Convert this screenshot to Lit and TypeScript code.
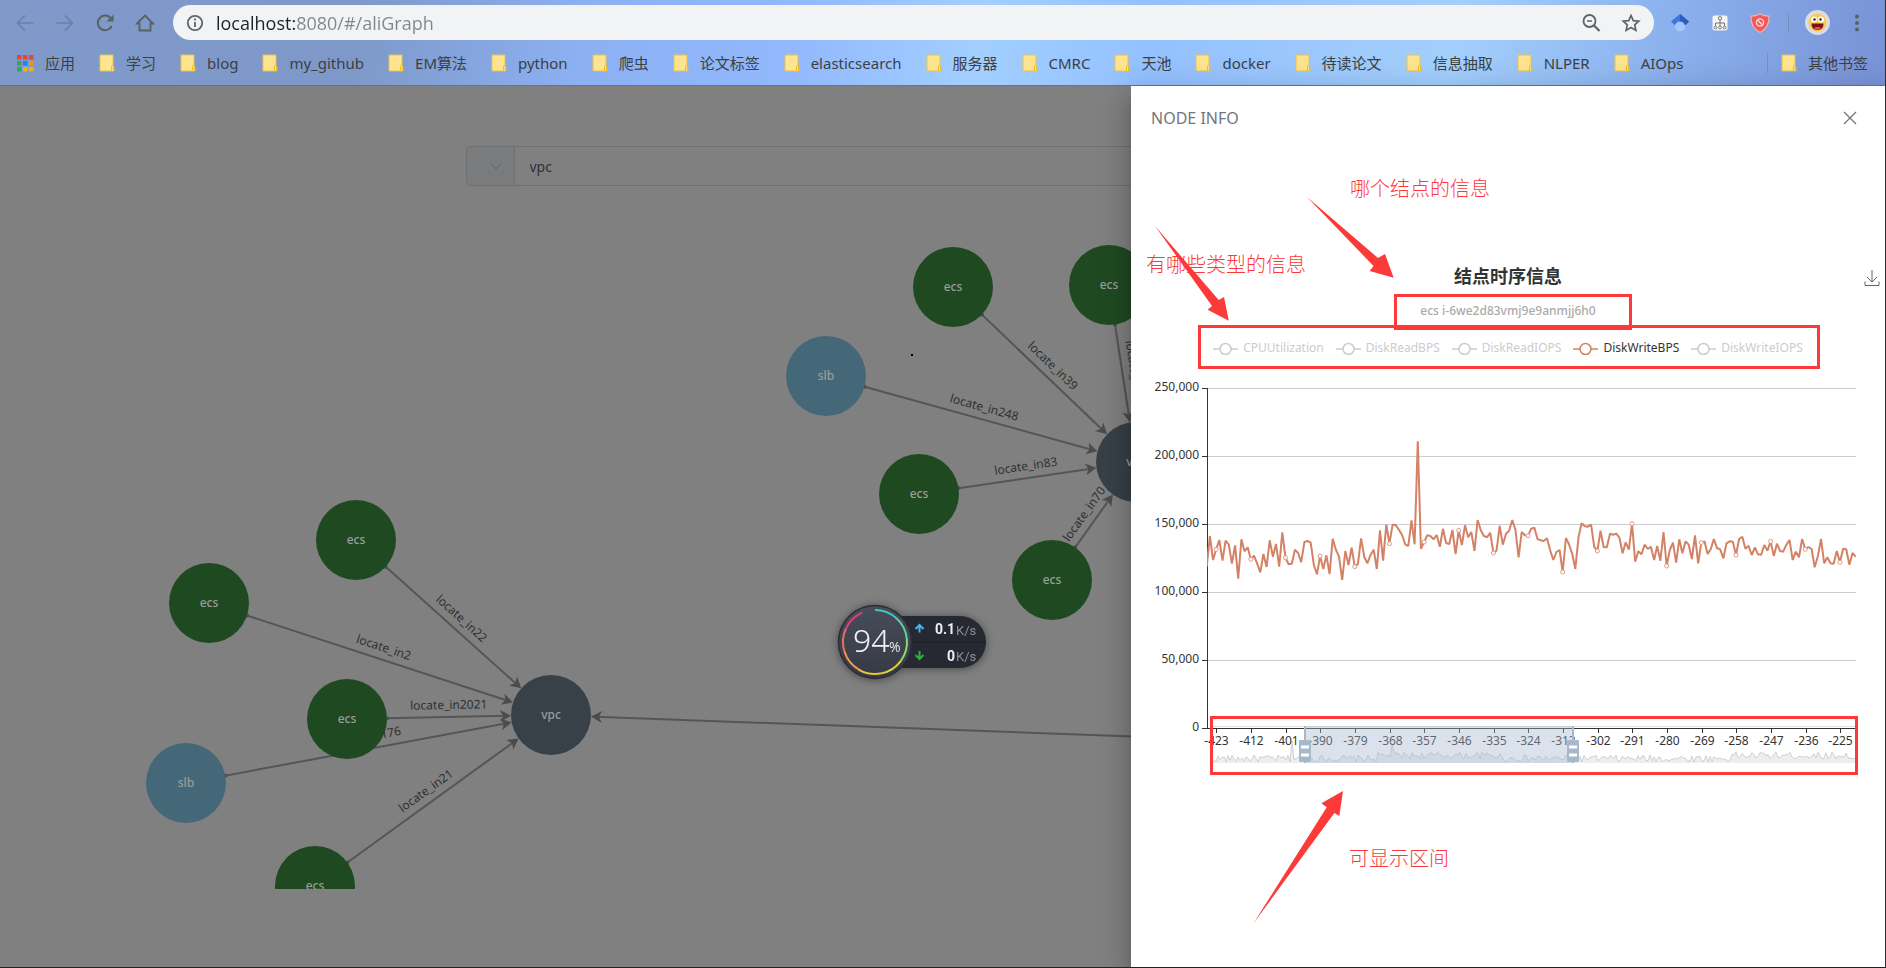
import { LitElement, html, svg, css } from "lit";
import { customElement, state } from "lit/decorators.js";

/* ---------- shared data ---------- */

const BOOKMARKS = [
  "学习", "blog", "my_github", "EM算法", "python", "爬虫", "论文标签", "elasticsearch", "服务器",
  "CMRC", "天池", "docker", "待读论文", "信息抽取", "NLPER", "AIOps",
];

interface Point { x: number; y: number }
interface GraphNode extends Point { kind: "ecs" | "slb" | "vpc" }
const NODES: Record<string, GraphNode> = {
  ecs1: { kind: "ecs", x: 356, y: 454 },
  ecs2: { kind: "ecs", x: 209, y: 517 },
  ecs3: { kind: "ecs", x: 347, y: 633 },
  slb1: { kind: "slb", x: 186, y: 697 },
  ecs4: { kind: "ecs", x: 315, y: 800 },
  vpc1: { kind: "vpc", x: 551, y: 629 },
  ecs5: { kind: "ecs", x: 953, y: 201 },
  ecs6: { kind: "ecs", x: 1109, y: 199 },
  slb2: { kind: "slb", x: 826, y: 290 },
  ecs7: { kind: "ecs", x: 919, y: 408 },
  ecs8: { kind: "ecs", x: 1052, y: 494 },
  vpc2: { kind: "vpc", x: 1136, y: 376 },
};
const OFFSCREEN: Point = { x: 1500, y: 664 };
const EDGES: [Point, Point, string][] = [
  [NODES.ecs1, NODES.vpc1, "locate_in22"],
  [NODES.ecs2, NODES.vpc1, "locate_in2"],
  [NODES.ecs3, NODES.vpc1, "locate_in2021"],
  [NODES.slb1, NODES.vpc1, "locate_in176"],
  [NODES.ecs4, NODES.vpc1, "locate_in21"],
  [NODES.ecs5, NODES.vpc2, "locate_in39"],
  [NODES.ecs6, NODES.vpc2, "locate_in12"],
  [NODES.slb2, NODES.vpc2, "locate_in248"],
  [NODES.ecs7, NODES.vpc2, "locate_in83"],
  [NODES.ecs8, NODES.vpc2, "locate_in70"],
  [OFFSCREEN, NODES.vpc1, ""],
];
const RADIUS = 40;

const SERIES = [
  { name: "CPUUtilization", on: false },
  { name: "DiskReadBPS", on: false },
  { name: "DiskReadIOPS", on: false },
  { name: "DiskWriteBPS", on: true },
  { name: "DiskWriteIOPS", on: false },
];

/* Sample heights, in thirds of a pixel below the top of the chart drawing. */
const SAMPLES = [
  590, 498, 570, 538, 510, 572, 512, 524, 581, 526, 626, 508, 544, 532, 568, 557, 580, 607, 552, 591,
  511, 560, 522, 590, 487, 563, 583, 581, 539, 549, 577, 516, 513, 518, 584, 613, 558, 597, 556, 612,
  506, 539, 560, 630, 543, 585, 533, 590, 582, 505, 560, 580, 555, 539, 597, 481, 572, 464, 521, 464,
  465, 479, 494, 523, 528, 451, 523, 214, 536, 516, 496, 498, 508, 495, 530, 476, 519, 522, 480, 552,
  481, 525, 466, 502, 486, 543, 450, 481, 498, 502, 488, 549, 542, 468, 524, 491, 482, 450, 479, 562,
  486, 496, 497, 476, 473, 507, 511, 513, 505, 540, 570, 546, 540, 606, 504, 523, 551, 597, 502, 460,
  469, 470, 464, 530, 543, 482, 532, 532, 491, 494, 491, 503, 550, 517, 539, 461, 575, 544, 553, 524,
  537, 530, 570, 528, 572, 486, 588, 540, 518, 578, 508, 550, 514, 524, 567, 496, 580, 518, 514, 552,
  537, 507, 535, 538, 565, 520, 514, 515, 555, 507, 500, 536, 527, 555, 532, 553, 554, 525, 542, 514,
  558, 521, 543, 545, 524, 510, 570, 545, 562, 507, 538, 531, 537, 592, 558, 507, 580, 562, 580, 581,
  543, 577, 536, 538, 584, 549, 560,
];
const FIRST_X = 75.7;
const LAST_X = 724.7;
const STEP = (LAST_X - FIRST_X) / (SAMPLES.length - 1);
const POINTS: Point[] = SAMPLES.map((v, i) => ({ x: FIRST_X + i * STEP, y: v / 3 }));

function overviewPoints(): Point[] {
  const out: Point[] = [];
  let seed = 17;
  for (let x = 79; x <= 727; x += 2) {
    seed = (seed * 1103515245 + 12345) % 2147483648;
    const noise = (seed / 2147483648) * 7;
    const rise = (x > 245 && x < 370) || (x > 600 && x < 720) ? 3 : 0;
    let y = 392 - noise - rise;
    if (x === 161) y = 371;
    if (x === 261) y = 374;
    out.push({ x, y });
  }
  return out;
}
const OVERVIEW = overviewPoints();
const path = (pts: Point[]) =>
  pts.map((p, i) => `${i ? "L" : "M"}${p.x.toFixed(1)} ${p.y.toFixed(1)}`).join("");

/* ---------- browser chrome ---------- */

@customElement("browser-bar")
class BrowserBar extends LitElement {
  static styles = css`
    :host {
      display: block;
      height: 86px;
      box-sizing: border-box;
      border-bottom: 1px solid #5877a8;
      background: linear-gradient(96deg, #7f9ac9 0%, #7e99c9 19%, #8cb0f2 31%, #92b8fd 42%, #a2cfff 52%, #94c0ff 61%, #a3cffc 77%, #8cb2ee 88%, #7892d6 100%);
      font-family: "Noto Sans", "Noto Sans CJK SC", sans-serif;
      color: #3c4043;
    }
    .tools { display: flex; align-items: center; padding: 5px 16px 0 13px; height: 35px; }
    .nav { display: flex; gap: 16px; margin-right: 16px; }
    button { border: 0; padding: 0; background: none; display: flex; color: inherit; font: inherit; }
    .icon { width: 24px; height: 24px; fill: none; stroke: currentColor; stroke-width: 2; }
    .dim { color: #6a80a6; }
    .dark { color: #56635f; }
    .omni { flex: 1; display: flex; align-items: center; height: 35px; border-radius: 18px; background: #f1f3f4; padding: 0 11px 0 10px; gap: 9px; color: #5f6368; }
    .url {
      flex: 1; min-width: 0; border: 0; padding: 0; outline: 0; height: 28px;
      font: 18px "Open Sans", sans-serif; color: transparent;
      background: linear-gradient(90deg, #202124 79px, #80868b 79px);
      -webkit-background-clip: text; background-clip: text;
    }
    .tail { display: flex; gap: 16px; }
    .ext { display: flex; gap: 16px; align-items: center; margin-left: 14px; }
    .rule { width: 1px; height: 20px; background: #7490bd; }
    .account { display: flex; align-items: center; gap: 15px; margin-left: 16px; }
    .marks { display: flex; align-items: center; height: 45px; padding: 0 17px; font-size: 15px; line-height: 20px; }
    .list { display: flex; gap: 24px; flex: 1; min-width: 0; }
    a { display: flex; align-items: center; gap: 11px; color: inherit; text-decoration: none; white-space: nowrap; }
    .folder { width: 16px; height: 18px; flex: none; }
    .apps { width: 17px; height: 18px; flex: none; }
    .other { display: flex; align-items: center; gap: 13px; }
  `;

  private folder() {
    return html`<svg class="folder" viewBox="0 0 16 18"><path d="M1 1h13v11.500l1 1V17H1z" fill="#ffe48f" stroke="#e8c24e" /><path d="M12.500 17v-4.500a1 1 0 0 1 2 0V17" fill="#ffdf7d" stroke="#f0bf22" /></svg>`;
  }

  render() {
    const dots = ["#ea4335", "#ea4335", "#ea4335", "#34a853", "#1a86f2", "#f29900", "#34a853", "#f6b100", "#f6b100"];
    return html`
      <div class="tools">
        <div class="nav">
          <button class="dim" aria-label="Back"><svg class="icon" viewBox="0 0 24 24"><path d="M20.500 12H5M12 4.500L4.500 12l7.500 7.500" stroke-width="1.700" /></svg></button>
          <button class="dim" aria-label="Forward"><svg class="icon" viewBox="0 0 24 24"><path d="M3.500 12H19M12 4.500l7.500 7.500-7.500 7.500" stroke-width="1.700" /></svg></button>
          <button class="dark" aria-label="Reload"><svg class="icon" viewBox="0 0 24 24"><path d="M18.700 15a7.300 7.300 0 1 1-1.400-8.200" /><path d="M20.500 3.500v7h-7z" fill="currentColor" stroke="none" /></svg></button>
          <button class="dark" aria-label="Home"><svg class="icon" viewBox="0 0 24 24"><path d="M4 12.500L12 4.500l8 8h-2.500v7h-11v-7z" stroke-width="1.800" /></svg></button>
        </div>
        <div class="omni">
          <svg class="icon" viewBox="0 0 24 24"><circle cx="12" cy="12" r="7.200" stroke-width="1.800" /><path d="M12 11v5M12 7.500v2" stroke-width="1.800" /></svg>
          <input class="url" aria-label="Address" value="localhost:8080/#/aliGraph" />
          <div class="tail">
            <button aria-label="Zoom out"><svg class="icon" viewBox="0 0 24 24"><circle cx="10.500" cy="10" r="6" stroke-width="1.800" /><path d="M15 14.500l5.500 5.500" stroke-width="2.200" /><path d="M8 10h5" stroke-width="1.500" /></svg></button>
            <button aria-label="Bookmark"><svg class="icon" viewBox="0 0 24 24"><path d="M12 4.500l2.300 5.100 5.500.6-4.100 3.700 1.200 5.500-4.900-2.800-4.900 2.800 1.200-5.500-4.100-3.700 5.500-.6z" stroke-width="1.700" /></svg></button>
          </div>
        </div>
        <div class="ext">
          <svg class="icon" viewBox="0 0 24 24"><path d="M12 3l9 7.500-3.500 3.500h-11L3 10.500z" fill="#3c78dc" stroke="none" /><path d="M12 3l9 7.500-3.500 3.500H12z" fill="#2a5dbd" stroke="none" /><circle cx="12" cy="15.500" r="5" fill="#a5c5ff" stroke="none" /></svg>
          <svg class="icon" viewBox="0 0 24 24"><rect x="4.500" y="4.500" width="15" height="15" rx="2" fill="#f5f5f5" stroke="none" /><g stroke="#777" stroke-width="1"><circle cx="12" cy="7.200" r="1.700" /><circle cx="7.500" cy="16.500" r="1.400" /><circle cx="12" cy="16.500" r="1.400" /><circle cx="16.500" cy="16.500" r="1.400" /><path d="M12 9v6M7.500 15v-3h9v3" /></g></svg>
          <svg class="icon" viewBox="0 0 24 24"><path d="M12 3c2.500 1.500 5.500 2.200 9 2.200.4 8-2.500 12.800-9 16.300-6.500-3.500-9.400-8.300-9-16.300 3.500 0 6.500-.7 9-2.200z" fill="#f0595c" stroke="#f7b0ae" stroke-width="1.200" /><circle cx="12" cy="11.500" r="3.600" stroke="#fbd5d3" stroke-width="1.400" /><path d="M9.500 9l5 5" stroke="#fbd5d3" stroke-width="1.400" /></svg>
          <span class="rule"></span>
        </div>
        <div class="account">
          <button aria-label="Profile"><svg width="25" height="25" viewBox="0 0 25 25"><circle cx="12.500" cy="12.500" r="12.500" fill="#dcdde2" /><circle cx="12.500" cy="12.500" r="9" fill="#fbc94c" /><circle cx="9" cy="9.500" r="3" fill="#fff" /><circle cx="16" cy="9.500" r="3" fill="#fff" /><circle cx="9.500" cy="9.500" r="1.200" fill="#222" /><circle cx="15.500" cy="9.500" r="1.200" fill="#222" /><path d="M6.500 13.500h12c0 4.500-2.500 6.500-6 6.500s-6-2-6-6.500z" fill="#7b1418" /><path d="M9 18c2-1.500 5-1.500 7 0-2 2-5 2-7 0z" fill="#e8575c" /></svg></button>
          <button class="dark" aria-label="Menu"><svg width="24" height="24" viewBox="0 0 24 24" fill="currentColor"><circle cx="12" cy="5.500" r="2" /><circle cx="12" cy="12" r="2" /><circle cx="12" cy="18.500" r="2" /></svg></button>
        </div>
      </div>
      <nav class="marks">
        <div class="list">
          <a href="#apps"><svg class="apps" viewBox="0 0 17 18">${dots.map((c, i) => svg`<rect x=${(i % 3) * 6} y=${Math.floor(i / 3) * 6 + 1} width="4.500" height="4.500" fill=${c} />`)}</svg>应用</a>
          ${BOOKMARKS.map((name) => html`<a href="#bookmark">${this.folder()}${name}</a>`)}
        </div>
        <div class="other"><span class="rule"></span><a href="#others">${this.folder()}其他书签</a></div>
      </nav>
    `;
  }
}

/* ---------- topology graph ---------- */

@customElement("topology-graph")
class TopologyGraph extends LitElement {
  static styles = css`
    :host { display: block; }
    svg { display: block; width: 100%; overflow: hidden; font: 12px "Noto Sans", "Noto Sans CJK SC", sans-serif; }
    .line { stroke: #555; stroke-width: 2; fill: none; }
    .tip { fill: #4c4c4c; }
    .label { fill: #2e3033; text-anchor: middle; }
    .name { fill: #9a9d9a; text-anchor: middle; font-weight: 500; }
    .ecs { fill: #1f4a21; }
    .slb { fill: #456879; }
    .vpc { fill: #384048; }
  `;

  private edge([a, b, label]: [Point, Point, string]) {
    const len = Math.hypot(b.x - a.x, b.y - a.y);
    const angle = (Math.atan2(b.y - a.y, b.x - a.x) * 180) / Math.PI;
    const end = len - RADIUS;
    return svg`<g transform="translate(${a.x} ${a.y}) rotate(${angle.toFixed(2)})">
      <path class="line" d="M${RADIUS} 0H${end - 4}" />
      <circle class="tip" cx=${RADIUS} cy="0" r="2" />
      <path class="tip" d="M${end} 0l-11 -6 3 6 -3 6z" />
      ${label ? svg`<text class="label" x=${len / 2} y="-8">${label}</text>` : ""}
    </g>`;
  }

  render() {
    return html`<svg viewBox="0 100 1885 703" role="img" aria-label="Topology">
      ${EDGES.map((e) => this.edge(e))}
      ${Object.values(NODES).map((n) => svg`<circle class=${n.kind} cx=${n.x} cy=${n.y} r=${RADIUS} /><text class="name" x=${n.x} y=${n.y + 4}>${n.kind}</text>`)}
      <rect x="911" y="268" width="2" height="2" />
    </svg>`;
  }
}

/* ---------- floating speed monitor ---------- */

@customElement("speed-ball")
class SpeedBall extends LitElement {
  static styles = css`
    :host { display: block; width: 156px; height: 80px; filter: drop-shadow(0 1px 4px rgba(0, 0, 0, 0.45)); }
    .big { font: 300 32px "Noto Sans", sans-serif; fill: #f2f2f4; }
    .pct { font: 14px "Open Sans", sans-serif; fill: #e8e8ea; }
    .num { font: 700 14px Roboto, sans-serif; fill: #f0f0f2; text-anchor: end; }
    .unit { font: 13px Roboto, sans-serif; fill: #8c8f99; }
    .arc { fill: none; stroke-width: 2; }
  `;

  render() {
    const stops = ["#3fc8c0", "#55d0a0", "#8fd472", "#d6d43c", "#e8c43a", "#ee9a4c", "#e8705c", "#dc3f78"];
    const span = 336 / stops.length;
    const at = (deg: number) => {
      const r = ((deg - 90) * Math.PI) / 180;
      return `${(40 + 32 * Math.cos(r)).toFixed(2)} ${(40 + 32 * Math.sin(r)).toFixed(2)}`;
    };
    return html`<svg width="156" height="80" viewBox="0 0 156 80">
      <defs><linearGradient id="ball" x2="0" y2="1"><stop stop-color="#484d5b" /><stop offset="1" stop-color="#363944" /></linearGradient></defs>
      <rect x="40" y="14" width="111" height="52" rx="26" fill="#262932" />
      <path d="M76 40H151" stroke="#1d2028" />
      <circle cx="40" cy="40" r="36.500" fill="url(#ball)" stroke="#2a2d38" stroke-width="1.500" />
      ${stops.map((c, i) => svg`<path class="arc" stroke=${c} d="M${at(i * span)}A32 32 0 0 1 ${at((i + 1) * span + 0.6)}" />`)}
      <text class="big" x="18" y="50">94</text><text class="pct" x="54" y="50">%</text>
      <path d="M84.500 30.500v-7M80.500 27l4-4 4 4" fill="none" stroke="#4ab2ee" stroke-width="2" />
      <path d="M84.500 49v7M80.500 53l4 4 4-4" fill="none" stroke="#29b43c" stroke-width="2" />
      <text class="num" x="120" y="32">0.1</text><text class="unit" x="121" y="33">K/s</text>
      <text class="num" x="120" y="59">0</text><text class="unit" x="121" y="59">K/s</text>
    </svg>`;
  }
}

/* ---------- time series chart ---------- */

@customElement("series-chart")
class SeriesChart extends LitElement {
  static styles = css`
    :host { display: block; position: relative; font: 12px/20px "Noto Sans", "Noto Sans CJK SC", sans-serif; color: #333; }
    h2 { margin: 0; font: 700 18px/24px "Noto Sans CJK SC", sans-serif; text-align: center; }
    .sub { margin: 15px 0 18px; line-height: 18px; text-align: center; color: #aaa; font-weight: 500; }
    .legend { display: flex; justify-content: center; gap: 12px; margin-bottom: 12px; }
    button { border: 0; padding: 0; background: none; font: inherit; color: inherit; display: flex; align-items: center; gap: 5px; }
    .off { color: #ccc; }
    .mark { width: 25px; height: 14px; fill: #fff; stroke: currentColor; stroke-width: 1.500; }
    .hot { color: #d48265; }
    .save { position: absolute; right: 5px; top: 6px; color: #666; }
    .plot { display: block; width: 100%; }
    .axis { stroke: #333; fill: none; }
    .grid { stroke: #ccc; }
    .ytext { text-anchor: end; fill: #333; }
    .xtext { text-anchor: middle; fill: #333; }
    .line { fill: none; stroke: #d48265; stroke-width: 2; stroke-linejoin: bevel; }
    .dot { fill: #fff; stroke: #dd9a83; }
    .grip { fill: #a7b7cc; }
  `;

  render() {
    const rows = [250000, 200000, 150000, 100000, 50000, 0];
    const ticks = Array.from({ length: 19 }, (_, i) => ({ x: Math.floor(85.7 + i * 34.67) + 0.5, label: -423 + i * 11 }));
    const dots = POINTS.filter((_, i) => i % 11 === 3);
    return html`
      <h2>结点时序信息</h2>
      <button class="save" aria-label="Save"><svg width="16" height="18" viewBox="0 0 16 18" fill="none" stroke="currentColor"><path d="M8 1v12M3 8l5 5 5-5M1 12.500v4h14v-4" /></svg></button>
      <p class="sub">ecs i-6we2d83vmj9e9anmjj6h0</p>
      <div class="legend">
        ${SERIES.map((s) => html`<button class=${s.on ? "on" : "off"}>
          <svg class="mark ${s.on ? "hot" : ""}" viewBox="0 0 25 14"><path d="M0 8h25" /><circle cx="12.500" cy="8" r="5.500" /></svg>${s.name}
        </button>`)}
      </div>
      <svg class="plot" viewBox="0 0 754 400" role="img" aria-label="DiskWriteBPS">
        <defs><clipPath id="area"><rect x="76" y="0" width="649" height="360" /></clipPath></defs>
        ${rows.map((v, i) => {
          const y = 18.5 + i * 68;
          return svg`${v ? svg`<path class="grid" d="M77 ${y}H725" />` : ""}<path class="axis" d="M71 ${y}h5" /><text class="ytext" x="68" y=${y + 2.5}>${v.toLocaleString("en-US")}</text>`;
        })}
        <path class="axis" d="M76.500 18V359M76 358.500H725" />
        ${ticks.map((t) => svg`<path class="axis" d="M${t.x} 359v4" /><text class="xtext" x=${t.x} y="375">${t.label}</text>`)}
        <path class="line" clip-path="url(#area)" d=${path(POINTS)} />
        ${dots.map((p) => svg`<circle class="dot" cx=${p.x} cy=${p.y} r="2" />`)}
        <path d="M79 356.500H727" stroke="#ddd" />
        <path d="${path(OVERVIEW)}L727 393H79z" fill="#2f4554" fill-opacity="0.090" />
        <path d=${path(OVERVIEW)} fill="none" stroke="#2f4554" stroke-opacity="0.200" />
        <rect x="174" y="356" width="268" height="37" fill="#a7b7cc" fill-opacity="0.400" />
        ${[174, 442].map((x) => svg`<rect class="grip" x=${x - 1} y="356" width="2" height="37" /><rect class="grip" x=${x - 6} y="370" width="12" height="22" rx="1" /><path d="M${x - 4} 377h8M${x - 4} 385h8" stroke="#fff" stroke-width="3" />`)}
      </svg>
    `;
  }
}

/* ---------- page ---------- */

@customElement("app-root")
class AppRoot extends LitElement {
  @state() private query = "vpc";

  static styles = css`
    :host { display: flex; flex-direction: column; height: 100vh; box-sizing: border-box; border-right: 1px solid #2b2e33; border-bottom: 1px solid #24221f; overflow: hidden; font-family: "Noto Sans", "Noto Sans CJK SC", sans-serif; }
    main { flex: 1; min-height: 0; position: relative; background: #808080; }
    form { display: flex; width: 954px; max-width: 100%; margin: 0 auto; padding-top: 60px; }
    .pick { position: relative; display: flex; }
    select { appearance: none; width: 49px; height: 40px; box-sizing: border-box; border: 1px solid #6e7072; border-radius: 4px 0 0 4px; background: #7a7b7d; }
    .chev { position: absolute; left: 23px; top: 13px; pointer-events: none; }
    .query { flex: 1; height: 40px; box-sizing: border-box; border: 1px solid #6e7072; border-left: 0; border-radius: 0 4px 4px 0; background: #808080; padding: 0 15px; font: 14px "Noto Sans", sans-serif; color: #303133; }
    .ball { position: absolute; left: 835px; top: 516px; }
    .drawer { position: absolute; top: 0; right: 0; bottom: 0; width: 40%; background: #fff; box-shadow: 0 8px 10px -5px rgba(0, 0, 0, 0.2), 0 16px 24px 2px rgba(0, 0, 0, 0.14), 0 6px 30px 5px rgba(0, 0, 0, 0.12); }
    header { display: flex; align-items: center; justify-content: space-between; padding: 20px 27px 0 20px; margin-bottom: 133px; color: #72767b; font-size: 16px; line-height: 24px; }
    .close { border: 0; padding: 0; background: none; display: flex; color: #72767b; }
    .notes { position: absolute; inset: 0; width: 100%; pointer-events: none; font: 300 20px "Noto Sans CJK SC", sans-serif; fill: #fc3a3a; }
    .box { fill: none; stroke: #fc3a3a; stroke-width: 3; }
  `;

  render() {
    return html`
      <browser-bar></browser-bar>
      <main>
        <form>
          <div class="pick">
            <select aria-label="Node type"><option></option></select>
            <svg class="chev" width="14" height="14" viewBox="0 0 14 14" fill="none" stroke="#606266"><path d="M2 5l5 5 5-5" /></svg>
          </div>
          <input class="query" aria-label="Query" .value=${this.query} />
        </form>
        <topology-graph></topology-graph>
        <speed-ball class="ball"></speed-ball>
        <aside class="drawer">
          <header><span>NODE INFO</span>
            <button class="close" aria-label="Close"><svg width="16" height="16" viewBox="0 0 16 16" fill="none" stroke="currentColor" stroke-width="1.300"><path d="M2 2l12 12M14 2L2 14" /></svg></button>
          </header>
          <series-chart></series-chart>
          <svg class="notes" viewBox="0 0 754 881">
            <rect class="box" x="264.500" y="209.500" width="235" height="33" />
            <rect class="box" x="68.500" y="240.500" width="619" height="41" />
            <rect class="box" x="80.500" y="631.500" width="645" height="56" />
            <path d="M176 111L242.500 180 238.600 185 262.700 191.700 254 168 247 172z" />
            <path d="M24 140L81 220 76.600 223.700 97.800 234.700 93 211 87.700 214z" />
            <path d="M122.400 837.500L195.700 721.300 190.400 717.300 212 705 208.300 730 203.400 727z" />
            <text x="219" y="110">哪个结点的信息</text>
            <text x="15" y="186">有哪些类型的信息</text>
            <text x="218" y="780">可显示区间</text>
          </svg>
        </aside>
      </main>
    `;
  }
}
